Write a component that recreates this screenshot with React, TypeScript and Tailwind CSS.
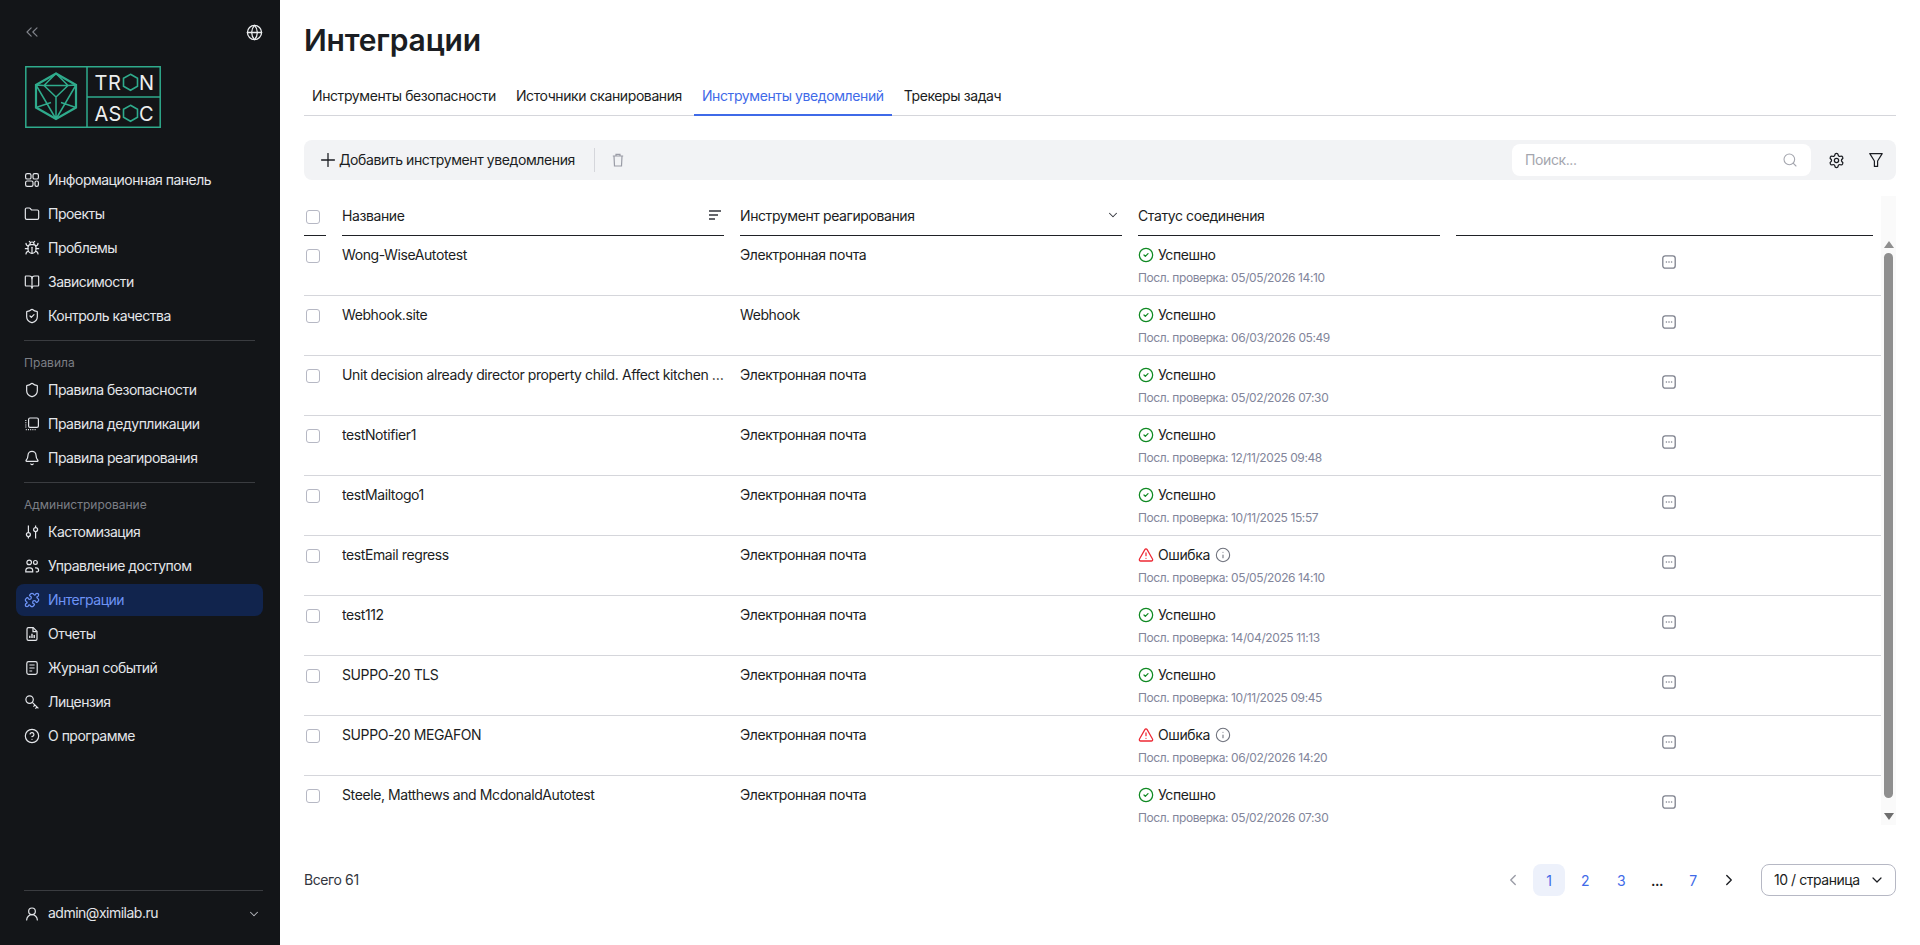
import { Bell, BookOpen, Bug, ChevronDown, ChevronLeft, ChevronRight, ChevronsLeft, CircleCheck, CircleHelp, Folder, Globe, Info, Plus, Puzzle, Search, Settings, Shield, ShieldCheck, TriangleAlert, UserRound } from "lucide-react"

type IconProps = {
  className?: string
}

const DashboardIcon: React.FC<IconProps> = ({ className }) => (
  <svg viewBox="0 0 16 16" fill="none" stroke="currentColor" strokeWidth="1.2" className={className}>
    <rect x="1.6" y="1.6" width="5.4" height="5.4" rx="1.6" />
    <rect x="9" y="1.6" width="5.4" height="5.4" rx="1.6" />
    <rect x="1.6" y="9" width="7.4" height="5.4" rx="1.6" />
    <rect x="11" y="9" width="3.4" height="5.4" rx="1.6" />
  </svg>
)

const DedupIcon: React.FC<IconProps> = ({ className }) => (
  <svg viewBox="0 0 16 16" fill="none" stroke="currentColor" strokeWidth="1.2" className={className}>
    <rect x="4.6" y="2" width="9.8" height="9.4" rx="1.4" />
    <path d="M1.8 4v8.8M1.8 13.6h10" strokeDasharray="1 1.2" />
  </svg>
)

const SlidersIcon: React.FC<IconProps> = ({ className }) => (
  <svg viewBox="0 0 16 16" fill="none" stroke="currentColor" strokeWidth="1.2" className={className}>
    <path d="M4.4 1.6v7M4.4 12.6v2M11.6 1.6v2M11.6 7.6v7" />
    <circle cx="4.4" cy="10.6" r="2" />
    <circle cx="11.6" cy="5.6" r="2" />
  </svg>
)

const UsersIcon: React.FC<IconProps> = ({ className }) => (
  <svg viewBox="0 0 16 16" fill="none" stroke="currentColor" strokeWidth="1.2" className={className}>
    <circle cx="5.200" cy="4.400" r="2.300" />
    <circle cx="11.400" cy="4.400" r="1.900" />
    <path d="M1.800 13.800v-1.200c0-1.600 1.200-2.800 2.800-2.800h1.300c1.600 0 2.800 1.200 2.800 2.800v1.200zM11 9.800h1.100c1.400 0 2.500 1.200 2.500 2.800 0 .8-.4 1.200-1.200 1.200h-1.600" />
  </svg>
)

const KeyIcon: React.FC<IconProps> = ({ className }) => (
  <svg viewBox="0 0 16 16" fill="none" stroke="currentColor" strokeWidth="1.2" className={className}>
    <circle cx="5.600" cy="5.600" r="3.700" />
    <path d="M8.300 8.300 14.400 14.400M11 11l-1.600 1.600M13 13l-1.600 1.600" />
  </svg>
)

const ReportIcon: React.FC<IconProps> = ({ className }) => (
  <svg viewBox="0 0 16 16" fill="none" stroke="currentColor" strokeWidth="1.2" className={className}>
    <path d="M3 3c0-.8.6-1.400 1.400-1.400h4.800L13 5.400v7.600c0 .8-.6 1.400-1.400 1.400H4.400C3.600 14.400 3 13.800 3 13z" />
    <path d="M9 1.800v3.800h3.800" />
    <path d="M5.800 12V9.800M8 12V7.800M10.200 12V9" strokeWidth="1.4" />
  </svg>
)

const JournalIcon: React.FC<IconProps> = ({ className }) => (
  <svg viewBox="0 0 16 16" fill="none" stroke="currentColor" strokeWidth="1.2" className={className}>
    <rect x="2.800" y="1.600" width="10.400" height="12.800" rx="1.800" />
    <path d="M5.400 5h5.200M5.400 8h5.200M5.400 11h2.800" />
  </svg>
)

const TrashNarrow: React.FC<IconProps> = ({ className }) => (
  <svg viewBox="0 0 16 16" fill="none" stroke="currentColor" strokeWidth="1.2" className={className}>
    <path d="M2.800 4h10.400M6 4V2.400h4V4M4 4l.5 10h7L12 4" />
  </svg>
)

const FunnelIcon: React.FC<IconProps> = ({ className }) => (
  <svg viewBox="0 0 16 16" fill="none" stroke="currentColor" strokeWidth="1.2" className={className}>
    <path d="M1.800 1.600h12.400L9.600 9v5.400H6.400V9z" strokeLinejoin="round" />
  </svg>
)

const SortIcon: React.FC<IconProps> = ({ className }) => (
  <svg viewBox="0 0 14 14" fill="none" stroke="currentColor" strokeWidth="1.500" className={className}>
    <path d="M1 3h12M1 7h9M1 11h6" />
  </svg>
)

const MoreIcon: React.FC<IconProps> = ({ className }) => (
  <svg viewBox="0 0 14 14" fill="none" stroke="currentColor" className={className}>
    <rect x=".8" y=".8" width="12.400" height="12.400" rx="2.500" strokeWidth="1.300" />
    <circle cx="4.400" cy="7" r=".8" fill="currentColor" stroke="none" />
    <circle cx="7" cy="7" r=".8" fill="currentColor" stroke="none" />
    <circle cx="9.600" cy="7" r=".8" fill="currentColor" stroke="none" />
  </svg>
)

const Logo: React.FC = () => (
  <svg viewBox="0 0 136 62" className="h-[62px] w-[136px]" fill="none">
    <g stroke="#2fab8c" strokeWidth="1.500">
      <path d="M.8.800h134.400v60.400H.8zM62 .8v60.400M62 31h73.200" />
      <path d="M31 7.500 51 19v22.500L31 53 11 41.500V19z" strokeWidth="2.200" />
      <path d="M31 7.500 19 19.500h24zM19 19.500 31 31l12-11.500M31 31v22M11 19l20 34M51 19 31 53M11 41.500l15-5M51 41.500l-15-5M11 19l8 .5M51 19l-8 .5" />
      <path d="M105.500 8.300l7 4v8l-7 4-7-4v-8z" strokeWidth="1.600" />
      <path d="M105.500 39.300l7 4v8l-7 4-7-4v-8z" strokeWidth="1.600" />
    </g>
    <g fill="#eceeee" fontFamily="Inter, sans-serif" fontSize="20" fontWeight="400">
      <text x="69.500" y="24">T</text>
      <text x="83" y="24">R</text>
      <text x="114" y="24">N</text>
      <text x="69.500" y="54.700">A</text>
      <text x="83.500" y="54.700">S</text>
      <text x="114" y="54.700">C</text>
    </g>
  </svg>
)

type NavEntry = {
  label: string
  icon: React.ReactNode
  active?: boolean
}

const iconClass = "size-4 shrink-0"

const mainNav: NavEntry[] = [
  { label: "Информационная панель", icon: <DashboardIcon className={iconClass} /> },
  { label: "Проекты", icon: <Folder size={16} strokeWidth={1.8} /> },
  { label: "Проблемы", icon: <Bug size={16} strokeWidth={1.8} /> },
  { label: "Зависимости", icon: <BookOpen size={16} strokeWidth={1.8} /> },
  { label: "Контроль качества", icon: <ShieldCheck size={16} strokeWidth={1.8} /> }
]

const rulesNav: NavEntry[] = [
  { label: "Правила безопасности", icon: <Shield size={16} strokeWidth={1.8} /> },
  { label: "Правила дедупликации", icon: <DedupIcon className={iconClass} /> },
  { label: "Правила реагирования", icon: <Bell size={16} strokeWidth={1.8} /> }
]

const adminNav: NavEntry[] = [
  { label: "Кастомизация", icon: <SlidersIcon className={iconClass} /> },
  { label: "Управление доступом", icon: <UsersIcon className={iconClass} /> },
  { label: "Интеграции", icon: <Puzzle size={16} strokeWidth={1.9} />, active: true },
  { label: "Отчеты", icon: <ReportIcon className={iconClass} /> },
  { label: "Журнал событий", icon: <JournalIcon className={iconClass} /> },
  { label: "Лицензия", icon: <KeyIcon className={iconClass} /> },
  { label: "О программе", icon: <CircleHelp size={16} strokeWidth={1.8} /> }
]

const NavList: React.FC<{ items: NavEntry[] }> = ({ items }) => (
  <div className="flex flex-col gap-[2px] px-4">
    {items.map(item => (
      <div
        key={item.label}
        className={
          item.active
            ? "flex h-8 w-[247px] items-center gap-2 rounded-lg bg-[#11244d] px-2 text-[14px] tracking-[-0.5px] text-[#6d93f5]"
            : "flex h-8 w-[247px] items-center gap-2 rounded-lg px-2 text-[14px] tracking-[-0.5px] text-[#e4e6ea]"
        }
      >
        {item.icon}
        <span className="mb-[2px]">{item.label}</span>
      </div>
    ))}
  </div>
)

const Sidebar: React.FC = () => (
  <aside className="flex h-full w-[280px] shrink-0 flex-col bg-[#131518]">
    <div className="mt-6 flex h-4 items-center justify-between pl-[22px] pr-[17px]">
      <ChevronsLeft size={20} strokeWidth={1.4} className="text-[#80838a]" />
      <Globe size={17} strokeWidth={1.8} className="text-[#eceef0]" />
    </div>
    <div className="ml-[25px] mt-[26px]">
      <Logo />
    </div>
    <div className="mt-9">
      <NavList items={mainNav} />
    </div>
    <div className="mx-6 mt-2 h-px w-[231px] bg-[#3a3c40]" />
    <div className="mb-[3px] ml-6 mt-[14px] h-4 text-[12px] leading-4 tracking-normal text-[#7c7f86]">Правила</div>
    <NavList items={rulesNav} />
    <div className="mx-6 mt-2 h-px w-[231px] bg-[#3a3c40]" />
    <div className="mb-[3px] ml-6 mt-[14px] h-4 text-[12px] leading-4 tracking-normal text-[#7c7f86]">Администрирование</div>
    <NavList items={adminNav} />
    <div className="ml-6 mt-auto h-[55px] w-[239px] border-t border-[#3a3c40]">
      <div className="flex items-center gap-2 pr-[2px] pt-[14px] text-[14px] leading-[16px] tracking-[-0.5px] text-[#e4e6ea]">
        <UserRound size={16} strokeWidth={1.8} />
        <span className="mb-[2px]">admin@ximilab.ru</span>
        <ChevronDown size={14} strokeWidth={1.8} className="ml-auto text-[#b5b7bc]" />
      </div>
    </div>
  </aside>
)

const tabs = ["Инструменты безопасности", "Источники сканирования", "Инструменты уведомлений", "Трекеры задач"]

const Tabs: React.FC = () => (
  <div className="mt-4 flex h-10 gap-1 border-b border-[#d5d6db]">
    {tabs.map(tab => (
      <div
        key={tab}
        className={
          tab === "Инструменты уведомлений"
            ? "-mb-px flex items-center border-b-2 border-[#3f6ae8] px-2 text-[14px] text-[#3f6ae8]"
            : "flex items-center px-2 text-[14px] text-[#1b1d22]"
        }
      >
        {tab}
      </div>
    ))}
  </div>
)

const Toolbar: React.FC = () => (
  <div className="mt-6 flex h-10 items-center rounded-lg bg-[#f2f3f5] pl-[13px] pr-3">
    <Plus size={22} strokeWidth={1.4} className="text-[#1b1d22]" />
    <span className="mb-[2px] text-[14px] text-[#1b1d22]">Добавить инструмент уведомления</span>
    <div className="ml-[19px] h-6 w-px bg-[#d5d6db]" />
    <TrashNarrow className="ml-[15px] size-4 text-[#9a9ca6]" />
    <div className="ml-auto flex h-8 w-[299px] items-center justify-between rounded-lg bg-white pl-[13px] pr-[13px]">
      <span className="mb-[2px] text-[14px] text-[#a4a6ae]">Поиск...</span>
      <Search size={16} strokeWidth={1.6} className="text-[#a4a6ae]" />
    </div>
    <Settings size={17} strokeWidth={1.8} className="ml-[17px] text-[#1b1d22]" />
    <FunnelIcon className="ml-[23px] size-4 text-[#1b1d22]" />
  </div>
)

type Row = {
  name: string
  tool: string
  ok: boolean
  checked: string
}

const rows: Row[] = [
  { name: "Wong-WiseAutotest", tool: "Электронная почта", ok: true, checked: "05/05/2026 14:10" },
  { name: "Webhook.site", tool: "Webhook", ok: true, checked: "06/03/2026 05:49" },
  { name: "Unit decision already director property child. Affect kitchen …", tool: "Электронная почта", ok: true, checked: "05/02/2026 07:30" },
  { name: "testNotifier1", tool: "Электронная почта", ok: true, checked: "12/11/2025 09:48" },
  { name: "testMailtogo1", tool: "Электронная почта", ok: true, checked: "10/11/2025 15:57" },
  { name: "testEmail regress", tool: "Электронная почта", ok: false, checked: "05/05/2026 14:10" },
  { name: "test112", tool: "Электронная почта", ok: true, checked: "14/04/2025 11:13" },
  { name: "SUPPO-20 TLS", tool: "Электронная почта", ok: true, checked: "10/11/2025 09:45" },
  { name: "SUPPO-20 MEGAFON", tool: "Электронная почта", ok: false, checked: "06/02/2026 14:20" },
  { name: "Steele, Matthews and McdonaldAutotest", tool: "Электронная почта", ok: true, checked: "05/02/2026 07:30" }
]

const Checkbox: React.FC = () => (
  <div className="ml-[2px] size-[14px] rounded-[3px] border border-[#b6b8c4] bg-white" />
)

const TableHeader: React.FC = () => (
  <div className="flex h-10 gap-4 pr-2 text-[14px] text-[#1b1d22]">
    <div className="flex w-[22px] items-center border-b border-[#1f2126] pt-[2px]">
      <Checkbox />
    </div>
    <div className="flex w-[382px] items-center justify-between border-b border-[#1f2126] pb-[1px] pr-[2px]">
      <span>Название</span>
      <SortIcon className="size-[14px] text-[#33363d]" />
    </div>
    <div className="flex w-[382px] items-center justify-between border-b border-[#1f2126] pb-[1px] pr-[2px]">
      <span>Инструмент реагирования</span>
      <ChevronDown size={14} strokeWidth={1.8} className="text-[#33363d]" />
    </div>
    <div className="flex w-[302px] items-center border-b border-[#1f2126] pb-[1px]">
      <span>Статус соединения</span>
    </div>
    <div className="flex-1 border-b border-[#1f2126]" />
  </div>
)

const TableRow: React.FC<{ row: Row }> = ({ row }) => (
  <div className="flex h-[60px] shrink-0 gap-4 border-b border-[#d5d6db] pt-[9px] text-[14px] leading-5 text-[#1b1d22]">
    <div className="w-[22px] pt-[4px]">
      <Checkbox />
    </div>
    <div className="w-[382px] truncate">{row.name}</div>
    <div className="w-[382px]">{row.tool}</div>
    <div className="w-[302px]">
      <div className="flex items-center">
        {row.ok
          ? <CircleCheck size={16} strokeWidth={1.9} className="text-[#108a23]" />
          : <TriangleAlert size={16} strokeWidth={1.9} className="text-[#ee2a35]" />}
        <span className="ml-[4px]">{row.ok ? "Успешно" : "Ошибка"}</span>
        {!row.ok && <Info size={16} strokeWidth={1.6} className="ml-[5px] text-[#6e717c]" />}
      </div>
      <div className="mt-1 text-[12px] leading-[18px] tracking-[-0.4px] text-[#82859a]">Посл. проверка: {row.checked}</div>
    </div>
    <div className="flex flex-1 justify-center pt-[10px]">
      <MoreIcon className="size-[14px] text-[#7d808c]" />
    </div>
  </div>
)

const Scrollbar: React.FC = () => (
  <div className="flex w-[15px] shrink-0 flex-col items-center bg-[#fafafa] pt-[45px]">
    <svg viewBox="0 0 10 7" className="h-[7px] w-[10px] fill-[#8f8f8f]">
      <path d="M5 0l5 7H0z" />
    </svg>
    <div className="mt-[5px] h-[545px] w-[9px] rounded-full bg-[#8f8f8f]" />
    <svg viewBox="0 0 10 7" className="mt-[15px] h-[7px] w-[10px] fill-[#6e6e6e]">
      <path d="M0 0h10L5 7z" />
    </svg>
  </div>
)

const Pagination: React.FC = () => (
  <div className="mt-[39px] flex h-8 items-center text-[14px]">
    <span className="mb-[2px] text-[#33363d]">Всего 61</span>
    <div className="ml-auto flex items-center gap-1">
      <div className="flex size-8 items-center justify-center text-[#9a9ca6]">
        <ChevronLeft size={18} strokeWidth={1.8} />
      </div>
      <div className="flex size-8 items-center justify-center rounded-lg bg-[#edf1fb] text-[#3f6ae8]">1</div>
      <div className="flex size-8 items-center justify-center text-[#3f6ae8]">2</div>
      <div className="flex size-8 items-center justify-center text-[#3f6ae8]">3</div>
      <div className="flex size-8 items-center justify-center font-semibold text-[#1b1d22]">...</div>
      <div className="flex size-8 items-center justify-center text-[#3f6ae8]">7</div>
      <div className="flex size-8 items-center justify-center text-[#1b1d22]">
        <ChevronRight size={18} strokeWidth={1.8} />
      </div>
    </div>
    <div className="ml-4 flex h-8 w-[135px] items-center justify-between rounded-lg border border-[#b6b8c4] pl-3 pr-[10px] text-[#1b1d22]">
      <span className="mb-[2px] tracking-[-0.45px]">10 / страница</span>
      <ChevronDown size={16} strokeWidth={1.8} />
    </div>
  </div>
)

export default function App() {
  return (
    <div className="flex h-screen w-full overflow-hidden bg-white font-['Inter',sans-serif] tracking-[-0.4px]">
      <Sidebar />
      <main className="flex min-w-0 flex-1 flex-col px-6 pt-5">
        <h1 className="text-[30px] font-semibold leading-10 tracking-[-0.2px] text-[#1b1d22]">Интеграции</h1>
        <Tabs />
        <Toolbar />
        <div className="mt-4 flex h-[629px]">
          <div className="min-w-0 flex-1 overflow-hidden">
            <TableHeader />
            <div className="flex h-[589px] flex-col overflow-hidden">
              {rows.map(row => (
                <TableRow key={row.name} row={row} />
              ))}
            </div>
          </div>
          <Scrollbar />
        </div>
        <Pagination />
      </main>
    </div>
  )
}
